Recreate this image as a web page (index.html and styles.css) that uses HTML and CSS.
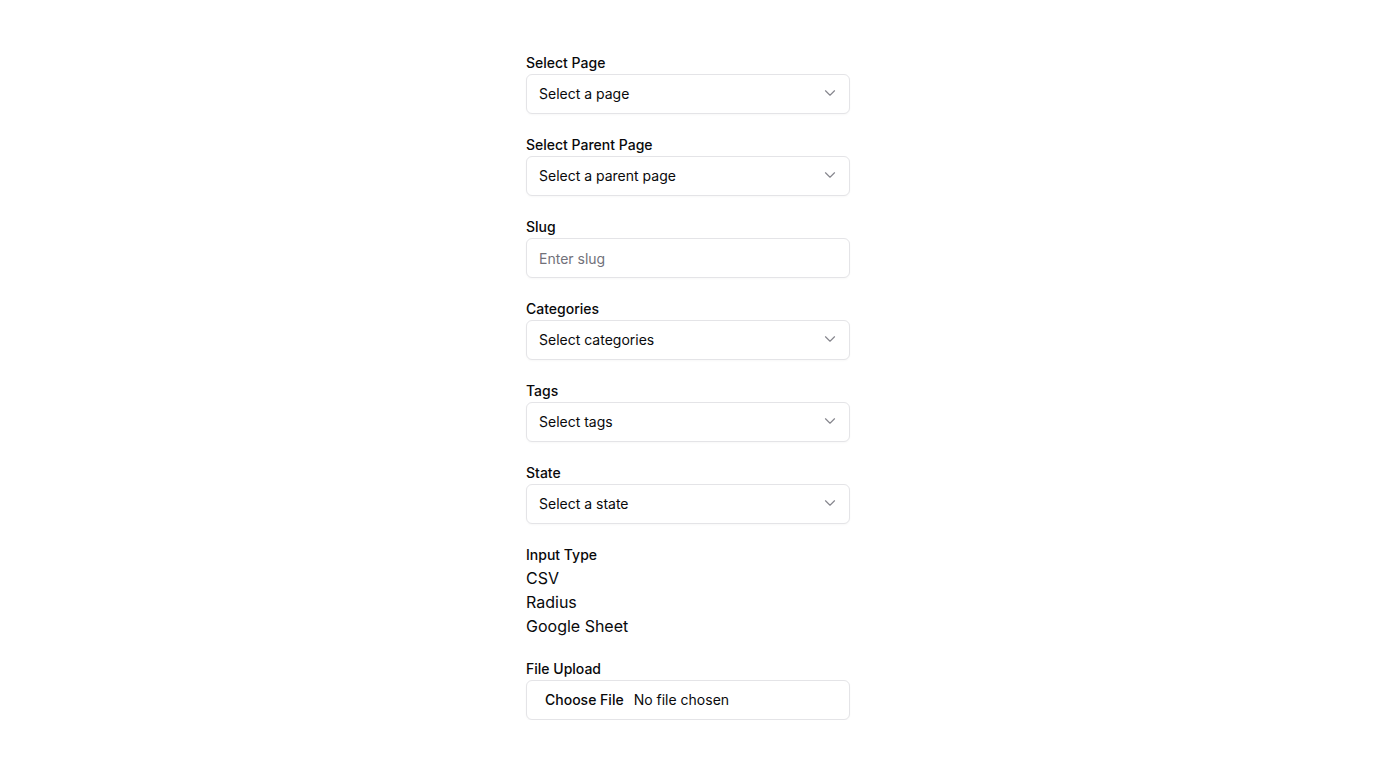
FILE: index.html
```html
<!DOCTYPE html>
<html lang="en">
<head>
<meta charset="utf-8">
<title>Form</title>
<link rel="stylesheet" href="styles.css">
</head>
<body>
<form class="form">
  <div class="field">
    <label class="label">Select Page</label>
    <button type="button" class="select"><span>Select a page</span><svg class="chev" viewBox="0 0 24 24"><path d="m6 9 6 6 6-6"/></svg></button>
  </div>
  <div class="field">
    <label class="label">Select Parent Page</label>
    <button type="button" class="select"><span>Select a parent page</span><svg class="chev" viewBox="0 0 24 24"><path d="m6 9 6 6 6-6"/></svg></button>
  </div>
  <div class="field">
    <label class="label" for="slug">Slug</label>
    <input id="slug" class="input" type="text" placeholder="Enter slug">
  </div>
  <div class="field">
    <label class="label">Categories</label>
    <button type="button" class="select"><span>Select categories</span><svg class="chev" viewBox="0 0 24 24"><path d="m6 9 6 6 6-6"/></svg></button>
  </div>
  <div class="field">
    <label class="label">Tags</label>
    <button type="button" class="select"><span>Select tags</span><svg class="chev" viewBox="0 0 24 24"><path d="m6 9 6 6 6-6"/></svg></button>
  </div>
  <div class="field">
    <label class="label">State</label>
    <button type="button" class="select"><span>Select a state</span><svg class="chev" viewBox="0 0 24 24"><path d="m6 9 6 6 6-6"/></svg></button>
  </div>
  <div class="field">
    <label class="label">Input Type</label>
    <div class="options">
      <div class="option">CSV</div>
      <div class="option">Radius</div>
      <div class="option">Google Sheet</div>
    </div>
  </div>
  <div class="field">
    <label class="label" for="file">File Upload</label>
    <input id="file" class="input file" type="file">
  </div>
</form>
</body>
</html>
```

FILE: styles.css
```css
* { box-sizing: border-box; }
html, body { margin: 0; background: #fff; }
body {
  font-family: Inter, "Noto Sans", sans-serif;
  color: #09090b;
  padding-top: 52px;
}
.form {
  width: 324px;
  margin: 0 auto;
  display: flex;
  flex-direction: column;
  gap: 20px;
}
.field {
  display: flex;
  flex-direction: column;
  gap: 2px;
}
.label {
  font-size: 14px;
  line-height: 18px;
  padding-top: 2px;
  font-weight: 500;
}
.select, .input {
  height: 40px;
  width: 100%;
  border: 1px solid #e4e4e7;
  border-radius: 6px;
  background: #fff;
  padding: 0 12px;
  font-family: inherit;
  font-size: 14px;
  color: #09090b;
  display: flex;
  align-items: center;
  justify-content: space-between;
  text-align: left;
  box-shadow: 0 1px 2px rgba(0,0,0,0.03);
}
.select { padding-bottom: 2px; }
.input::placeholder { color: #71717a; }
.chev {
  width: 18px;
  height: 18px;
  margin-right: -2px;
  fill: none;
  stroke: #71717a;
  stroke-width: 1.5;
  stroke-linecap: round;
  stroke-linejoin: round;
  opacity: 0.85;
}
.options { display: flex; flex-direction: column; }
.option { font-size: 16px; line-height: 24px; }
.file { padding-top: 0; padding-bottom: 2px; line-height: 36px; }
.file::file-selector-button {
  border: 0;
  background: transparent;
  font-family: inherit;
  font-size: 14px;
  font-weight: 500;
  color: #09090b;
  padding: 0 6px;
  margin-right: 4px;
  height: 36px;
}
```
